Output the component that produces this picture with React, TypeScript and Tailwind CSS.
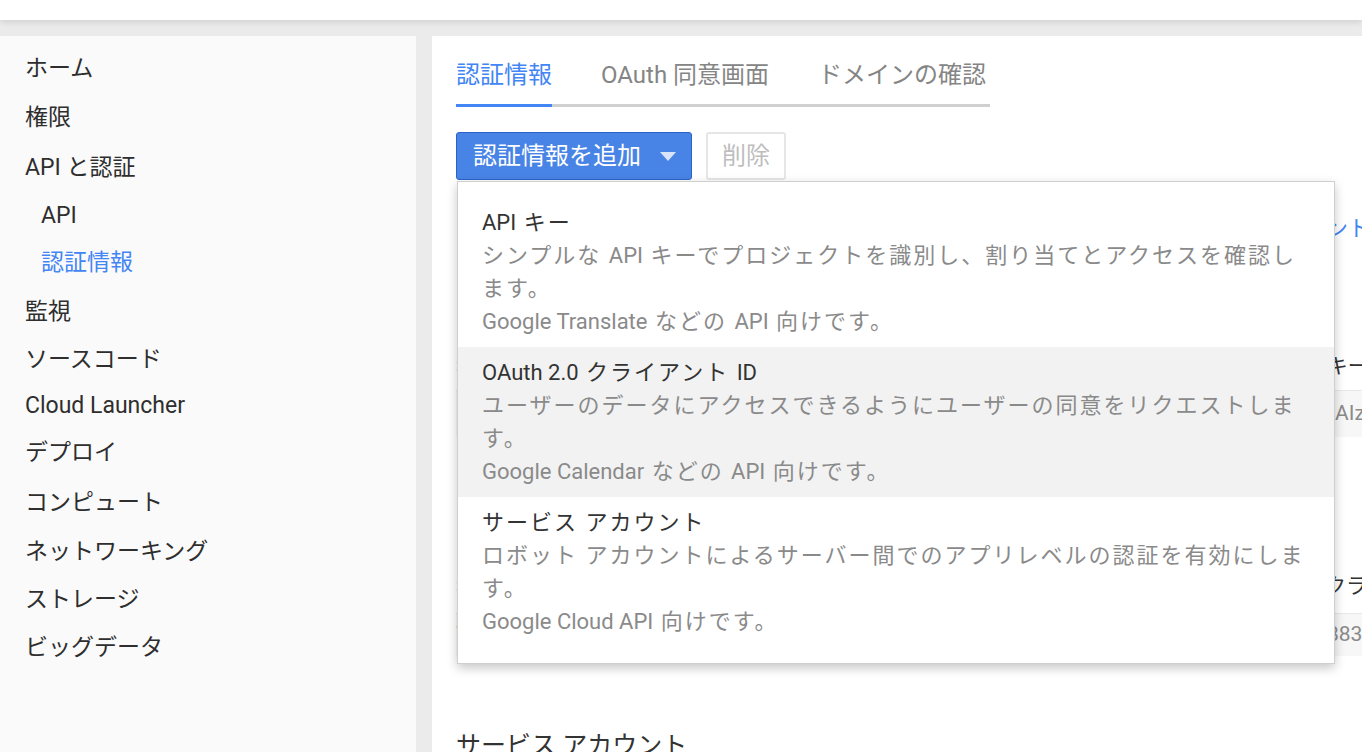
import React from 'react';

const FONT = 'font-["Roboto","Noto_Sans_CJK_JP",sans-serif]';

type NavItem = { label: string; h: number; sub?: boolean; active?: boolean };

const NAV: NavItem[] = [
  { label: 'ホーム', h: 48 },
  { label: '権限', h: 50 },
  { label: 'API と認証', h: 51 },
  { label: 'API', h: 45, sub: true },
  { label: '認証情報', h: 48, sub: true, active: true },
  { label: '監視', h: 50 },
  { label: 'ソースコード', h: 46 },
  { label: 'Cloud Launcher', h: 46 },
  { label: 'デプロイ', h: 49 },
  { label: 'コンピュート', h: 50 },
  { label: 'ネットワーキング', h: 48 },
  { label: 'ストレージ', h: 48 },
  { label: 'ビッグデータ', h: 48 },
];

const OPTIONS = [
  {
    title: 'API キー',
    desc: 'シンプルな API キーでプロジェクトを識別し、割り当てとアクセスを確認します。',
    note: 'Google Translate などの API 向けです。',
  },
  {
    title: 'OAuth 2.0 クライアント ID',
    desc: 'ユーザーのデータにアクセスできるようにユーザーの同意をリクエストします。',
    note: 'Google Calendar などの API 向けです。',
    hover: true,
  },
  {
    title: 'サービス アカウント',
    desc: 'ロボット アカウントによるサーバー間でのアプリレベルの認証を有効にします。',
    note: 'Google Cloud API 向けです。',
  },
];

// latin runs keep normal spacing, kana/kanji get the wider pitch
function Mixed({ text }: { text: string }) {
  const parts = text.split(/([A-Za-z0-9.]+(?: [A-Za-z0-9.]+)*)/);
  return (
    <>
      {parts.map((p, i) =>
        /[A-Za-z0-9]/.test(p) ? (
          <span key={i} className="tracking-normal">{p}</span>
        ) : (
          <React.Fragment key={i}>{p}</React.Fragment>
        )
      )}
    </>
  );
}

function Sidebar() {
  return (
    <nav className="w-[416px] shrink-0 bg-[#fafafa] pt-[9px]">
      {NAV.map((n) => (
        <div
          key={n.label}
          style={{ height: n.h }}
          className={`flex items-center text-[23px] ${n.sub ? 'pl-[41px]' : 'pl-[25px]'} ${
            n.active ? 'text-[#4285f4]' : 'text-[#2e2e2e]'
          }`}
        >
          {n.label}
        </div>
      ))}
    </nav>
  );
}

function Tabs() {
  const tabs = ['認証情報', 'OAuth 同意画面', 'ドメインの確認'];
  return (
    <div className="flex w-[534px] gap-[49px] border-b-[3px] border-[#d0d0d0]">
      {tabs.map((t, i) => (
        <div
          key={t}
          className={`-mb-[3px] pb-[13px] text-[24px] leading-[32px] border-b-[3px] ${
            i === 0 ? 'text-[#4285f4] border-[#4285f4]' : 'text-[#858585] border-transparent'
          }`}
        >
          {t}
        </div>
      ))}
    </div>
  );
}

function Dropdown() {
  return (
    <div className="absolute left-[1px] top-[49px] z-10 w-[878px] border border-[#cfcfcf] bg-white pt-[15px] pb-[16px] shadow-[0_4px_10px_rgba(0,0,0,0.22)]">
      {OPTIONS.map((o) => (
        <div
          key={o.title}
          className={`px-[24px] py-[9px] text-[22px] leading-[33px] tracking-[2px] ${o.hover ? 'bg-[#f2f2f2]' : ''}`}
        >
          <div className="text-[#333]"><Mixed text={o.title} /></div>
          <div className="pr-[2px] text-[#8a8a8a]"><Mixed text={o.desc} /></div>
          <div className="text-[#8a8a8a]"><Mixed text={o.note} /></div>
        </div>
      ))}
    </div>
  );
}

export default function App() {
  return (
    <div className={`${FONT} h-[752px] w-[1362px] overflow-hidden bg-[#ebebeb]`}>
      <div className="relative z-20 h-[20px] bg-white shadow-[0_2px_6px_rgba(0,0,0,0.12)]" />
      <div className="flex gap-[16px] pt-[16px] h-[732px]">
        <Sidebar />
        <main className="flex-1 bg-white pl-[24px] pt-[23px] min-w-0">
          <Tabs />

          <div className="relative mt-[25px]">
            <div className="flex gap-[14px]">
              <button className="flex h-[48px] w-[236px] items-center rounded-[3px] border border-[#2c62c6] bg-[#4884e6] pl-[16px] text-[24px] text-white">
                認証情報を追加
                <svg className="ml-[19px]" width="16" height="9" viewBox="0 0 16 9">
                  <path d="M0 0 L16 0 L8 9 Z" fill="#d8e4fa" />
                </svg>
              </button>
              <button className="h-[48px] w-[80px] rounded-[3px] border-2 border-[#e6e6e6] text-[24px] text-[#bdbdbd]">
                削除
              </button>
            </div>
            <Dropdown />
          </div>

          {/* page content under the open menu */}
          <div className="mt-[33px] grid grid-cols-[879px_1fr] text-[22px]">
            <div className="leading-[32px] text-[#333]">プロジェクトの API にアクセスするための認証情報を作成します。</div>
            <div className="-ml-[96px] whitespace-nowrap leading-[32px] text-[#4285f4]">クライアント</div>
          </div>

          <div className="mt-[105px] grid grid-cols-[879px_1fr] text-[21px] text-[#333]">
            <div className="leading-[32px]">名前</div>
            <div className="-ml-[46px] whitespace-nowrap leading-[32px]">API キー</div>
          </div>
          <div className="mt-[8px] grid h-[47px] grid-cols-[879px_1fr] items-center border-t border-[#e8e8e8] bg-[#f7f7f7] text-[21px] text-[#8a8a8a]">
            <div>Browser key 1</div>
            <div className="whitespace-nowrap">AIzaSyD3kQ</div>
          </div>

          <div className="mt-[133px] grid grid-cols-[879px_1fr] text-[21px] text-[#333]">
            <div className="leading-[32px]">名前</div>
            <div className="-ml-[10px] whitespace-nowrap leading-[32px]">クライアント ID</div>
          </div>
          <div className="mt-[11px] grid h-[43px] grid-cols-[879px_1fr] items-center border-t border-[#e8e8e8] bg-[#f7f7f7] text-[21px] text-[#8a8a8a]">
            <div>Web client 1</div>
            <div className="-ml-[8px] whitespace-nowrap">8835012</div>
          </div>

          <div className="mt-[74px] text-[25px] leading-[32px] text-[#333]">サービス アカウント</div>
        </main>
      </div>
    </div>
  );
}
